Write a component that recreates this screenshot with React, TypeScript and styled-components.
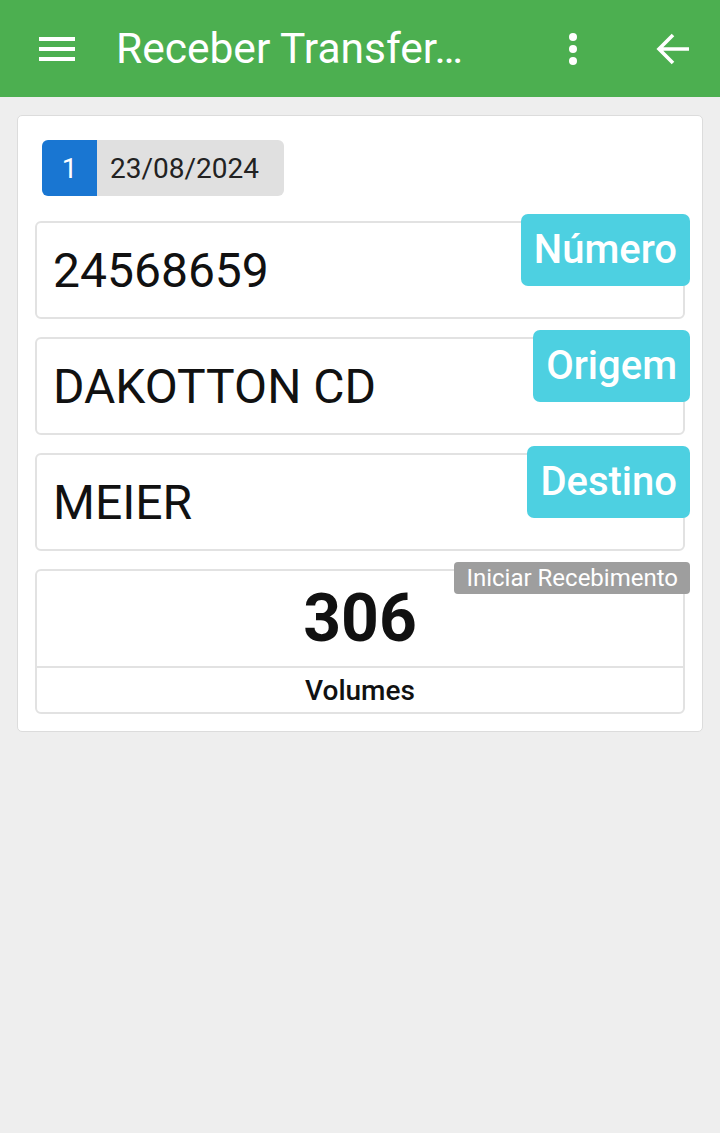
import styled, { createGlobalStyle } from "styled-components";

const GlobalStyle = createGlobalStyle`
  html, body {
    margin: 0;
    padding: 0;
    background: #eeeeee;
    font-family: Roboto, "Noto Sans", sans-serif;
  }
`;

const fields = [
  { value: "24568659", label: "Número" },
  { value: "DAKOTTON CD", label: "Origem" },
  { value: "MEIER", label: "Destino" },
];

const App = () => {
  return (
    <Page>
      <GlobalStyle />
      <Header>
        <IconButton aria-label="menu">
          <svg width="38" height="26" viewBox="0 0 38 26">
            <rect x="1" y="1" width="36" height="4" fill="#fff" />
            <rect x="1" y="11" width="36" height="4" fill="#fff" />
            <rect x="1" y="21" width="36" height="4" fill="#fff" />
          </svg>
        </IconButton>
        <Title>Receber Transfer…</Title>
        <Actions>
          <IconButton aria-label="mais">
            <svg width="10" height="34" viewBox="0 0 10 34">
              <circle cx="5" cy="5" r="4" fill="#fff" />
              <circle cx="5" cy="17" r="4" fill="#fff" />
              <circle cx="5" cy="29" r="4" fill="#fff" />
            </svg>
          </IconButton>
          <IconButton aria-label="voltar">
            <svg width="34" height="32" viewBox="0 0 34 32">
              <path
                d="M33 16H4M17 2L3 16l14 14"
                fill="none"
                stroke="#fff"
                strokeWidth="3.6"
              />
            </svg>
          </IconButton>
        </Actions>
      </Header>

      <Card>
        <Badge>
          <BadgeIndex>1</BadgeIndex>
          <BadgeDate>23/08/2024</BadgeDate>
        </Badge>

        {fields.map((f) => (
          <Field key={f.label}>
            <FieldValue>{f.value}</FieldValue>
            <FieldLabel>{f.label}</FieldLabel>
          </Field>
        ))}

        <VolumeBox>
          <VolumeCount>306</VolumeCount>
          <VolumeCaption>Volumes</VolumeCaption>
          <StartTag>Iniciar Recebimento</StartTag>
        </VolumeBox>
      </Card>
    </Page>
  );
};

const Page = styled.div`
  min-height: 1133px;
  background: #eeeeee;
`;

const Header = styled.header`
  display: flex;
  align-items: center;
  height: 97px;
  background: #4caf50;
  padding: 0 30px 0 38px;
  box-sizing: border-box;
`;

const IconButton = styled.div`
  display: flex;
  align-items: center;
  justify-content: center;
  svg {
    display: block;
  }
`;

const Title = styled.h1`
  margin: 0 0 0 40px;
  font-weight: 400;
  font-size: 42.5px;
  color: #fff;
  white-space: nowrap;
`;

const Actions = styled.div`
  margin-left: auto;
  display: flex;
  align-items: center;
  gap: 78px;
`;

const Card = styled.main`
  margin: 18px 17px 0 17px;
  background: #fff;
  border: 1px solid #dcdcdc;
  border-radius: 5px;
  padding: 24px 17px 17px 17px;
  display: flex;
  flex-direction: column;
  gap: 18px;
`;

const Badge = styled.div`
  display: flex;
  align-self: flex-start;
  height: 56px;
  margin-left: 7px;
  margin-bottom: 7px;
  border-radius: 6px;
  overflow: hidden;
  font-size: 28px;
`;

const BadgeIndex = styled.div`
  width: 55px;
  display: flex;
  align-items: center;
  justify-content: center;
  background: #1976d2;
  color: #fff;
`;

const BadgeDate = styled.div`
  display: flex;
  align-items: center;
  padding: 0 25px 0 13px;
  background: #e0e0e0;
  color: #222;
`;

const Field = styled.div`
  position: relative;
  height: 98px;
  box-sizing: border-box;
  border: 2px solid #e2e2e2;
  border-radius: 6px;
  display: flex;
  align-items: center;
  padding-left: 16px;
`;

const FieldValue = styled.div`
  font-size: 48px;
  color: #111;
`;

const FieldLabel = styled.div`
  position: absolute;
  top: -9px;
  right: -7px;
  height: 72px;
  line-height: 72px;
  padding: 0 13px;
  border-radius: 7px;
  background: #4dd0e1;
  color: #fff;
  font-size: 40px;
  font-weight: 500;
`;

const VolumeBox = styled.div`
  position: relative;
  display: flex;
  flex-direction: column;
  border: 2px solid #e2e2e2;
  border-radius: 6px;
`;

const VolumeCount = styled.div`
  height: 95px;
  display: flex;
  align-items: center;
  justify-content: center;
  font-size: 66px;
  font-weight: 700;
  color: #111;
  border-bottom: 2px solid #e2e2e2;
`;

const VolumeCaption = styled.div`
  height: 44px;
  display: flex;
  align-items: center;
  justify-content: center;
  font-size: 28px;
  font-weight: 500;
  color: #111;
`;

const StartTag = styled.div`
  position: absolute;
  top: -9px;
  right: -7px;
  height: 32px;
  line-height: 32px;
  padding: 0 12px;
  border-radius: 4px;
  background: #9e9e9e;
  color: #fff;
  font-size: 24px;
`;

export default App;
